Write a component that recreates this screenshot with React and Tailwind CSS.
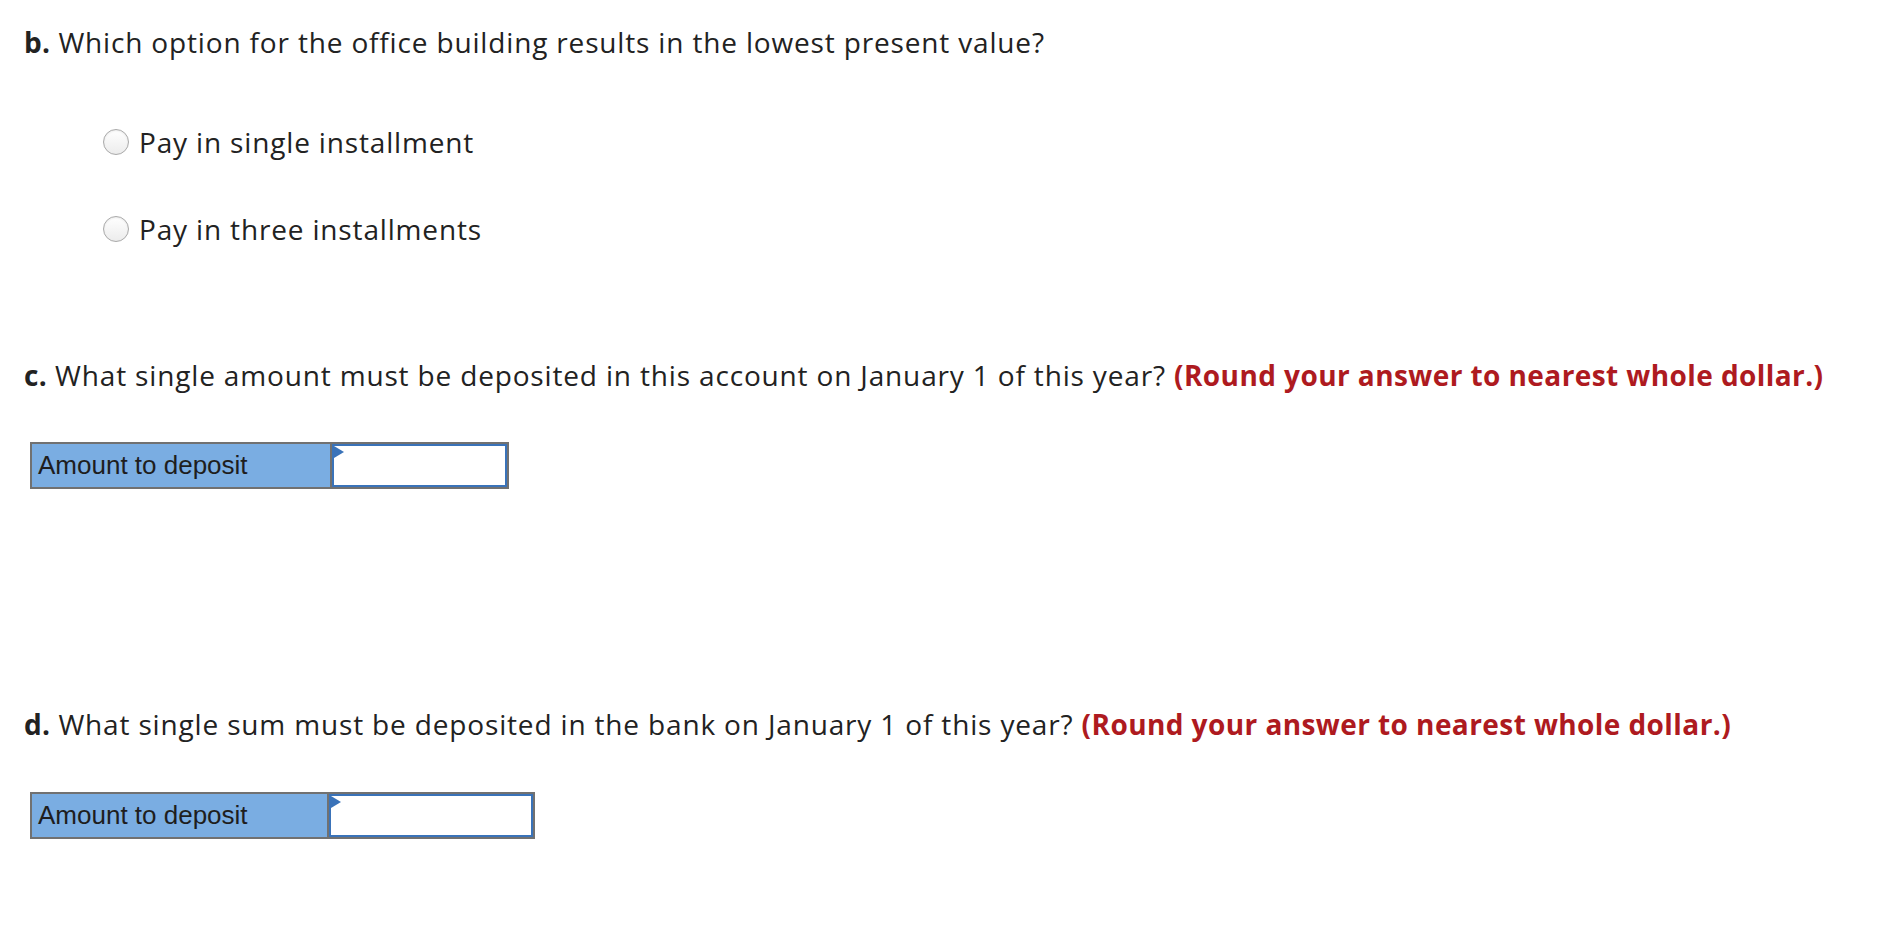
import React from 'react';

const Radio = ({ label }) => (
  <div className="flex items-center h-[36px]">
    <span className="w-[26px] h-[26px] rounded-full border border-[#a9a9a9] bg-gradient-to-b from-white to-[#ececec] shadow-[inset_0_1px_2px_rgba(0,0,0,0.08)]" />
    <span className="ml-[10px]">{label}</span>
  </div>
);

const AnswerTable = ({ width, labelWidth }) => (
  <div className="ml-[6px] flex h-[47px] border-2 border-[#717171]" style={{ width }}>
    <div
      className="flex items-center bg-[#7aade2] pl-[6px] text-[26px] tracking-normal text-[#1e1e1e] border-r-2 border-[#717171]"
      style={{ width: labelWidth, fontFamily: '"Liberation Sans", Arial, sans-serif' }}
    >
      Amount to deposit
    </div>
    <div className="relative flex-1 bg-white border-2 border-[#3a73b9]">
      <span className="absolute left-0 top-0 w-0 h-0 border-y-[6px] border-y-transparent border-l-[10px] border-l-[#3a73b9]" />
    </div>
  </div>
);

export default function App() {
  return (
    <div
      className="min-h-screen bg-white pl-[24px] pt-[24px] text-[28px] tracking-[0.03em] text-[#222222]"
      style={{ fontFamily: '"Open Sans", "Noto Sans", sans-serif' }}
    >
      {/* part b */}
      <div className="h-[36px] leading-[36px]">
        <span className="font-bold tracking-[0.01em]">b.</span> Which option for the office building results in the lowest present value?
      </div>

      <div className="ml-[79px] mt-[64px]">
        <Radio label="Pay in single installment" />
        <div className="mt-[51px]">
          <Radio label="Pay in three installments" />
        </div>
      </div>

      {/* part c */}
      <div className="mt-[110px] h-[36px] leading-[36px] whitespace-nowrap">
        <span className="font-bold tracking-[0.01em]">c.</span> What single amount must be deposited in this account on January 1 of this year?{' '}
        <span className="font-bold tracking-[0.015em] text-[#ae1a20]">(Round your answer to nearest whole dollar.)</span>
      </div>
      <div className="mt-[49px]">
        <AnswerTable width={479} labelWidth={300} />
      </div>

      {/* part d */}
      <div className="mt-[217px] h-[36px] leading-[36px] whitespace-nowrap">
        <span className="font-bold tracking-[0.01em]">d.</span> What single sum must be deposited in the bank on January 1 of this year?{' '}
        <span className="font-bold tracking-[0.015em] text-[#ae1a20]">(Round your answer to nearest whole dollar.)</span>
      </div>
      <div className="mt-[50px]">
        <AnswerTable width={505} labelWidth={297} />
      </div>
    </div>
  );
}
